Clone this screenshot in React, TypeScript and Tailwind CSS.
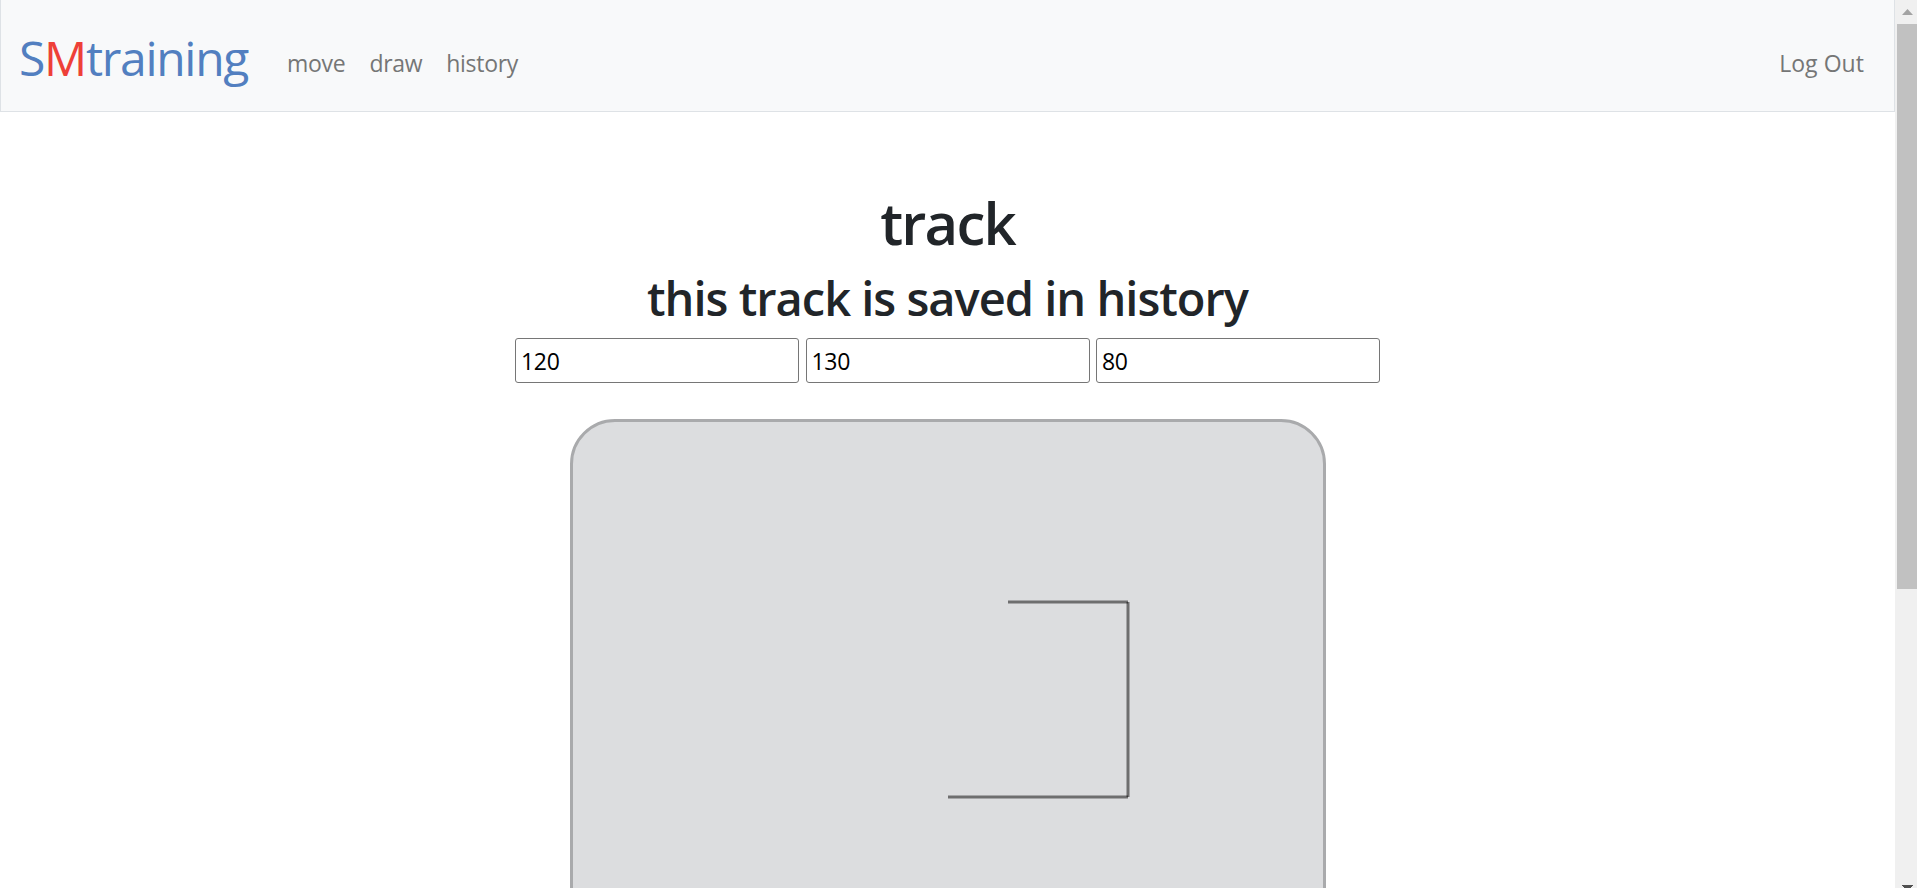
const logs = ['120', '130', '80'];

function Header() {
  return (
    <header className="flex h-28 items-center border border-t-0 border-[#dee2e6] bg-[#f8f9fa] pl-[18px] pr-[30px] text-[23px] tracking-[-0.3px] text-[#757676]">
      <a className="mt-1 whitespace-nowrap text-[48px] leading-[72px] tracking-[-1.3px] text-[#527fc0]">
        S<span className="text-[#ee4038]">M</span>training
      </a>
      <nav className="ml-[39px] mt-[14px] flex gap-6 leading-9">
        <a>move</a>
        <a>draw</a>
        <a>history</a>
      </nav>
      <a className="ml-auto mt-[14px] whitespace-nowrap leading-9 tracking-[0.05px]">Log Out</a>
    </header>
  );
}

function Track() {
  return (
    <svg width="750" height="600" viewBox="0 0 750 600" fill="none" stroke="#000" strokeOpacity="0.5" strokeWidth="3">
      <path d="M435 180H555" />
      <path d="M555 180V375" />
      <path d="M555 375H375" />
    </svg>
  );
}

function Scrollbar() {
  return (
    <div className="flex h-full w-[22px] shrink-0 flex-col bg-[#f0f0f0] pl-[2px]">
      <svg width="20" height="24" viewBox="0 0 20 24" className="shrink-0">
        <path d="M5 15 10.500 9 16 15Z" fill="#a3a3a3" />
      </svg>
      <div className="h-[565px] shrink-0 bg-[#c1c1c1]" />
      <svg width="20" height="3" viewBox="0 0 20 3" className="mt-auto shrink-0">
        <path d="M5 0H16V1H15V2H14V3H7V2H6V1H5Z" fill="#505050" />
      </svg>
    </div>
  );
}

export default function App() {
  return (
    <div className="flex h-[888px] w-[1917px] overflow-hidden bg-white font-['Open_Sans','Noto_Sans',sans-serif] text-[#212529]">
      <div className="w-[1895px] shrink-0">
        <Header />
        <main className="flex flex-col items-center pt-[75px]">
          <h1 className="text-[58px] font-semibold leading-[72px] tracking-[-1.8px]">track</h1>
          <h2 className="mt-[10px] text-[47px] font-semibold leading-[58px] tracking-[-1px]">
            this track is saved in history
          </h2>
          <div className="mt-[11px] flex gap-[6.500px]">
            {logs.map((v) => (
              <input
                key={v}
                defaultValue={v}
                className="h-[45px] w-[284px] rounded-[3px] border border-[#767676] bg-white px-[5px] text-[23px] tracking-[-0.3px] text-black"
              />
            ))}
          </div>
          <div className="mt-9 h-[606px] w-[756px] rounded-[45px] border-[3px] border-[#a9aaac] bg-[#dcdddf]">
            <Track />
          </div>
        </main>
      </div>
      <Scrollbar />
    </div>
  );
}
